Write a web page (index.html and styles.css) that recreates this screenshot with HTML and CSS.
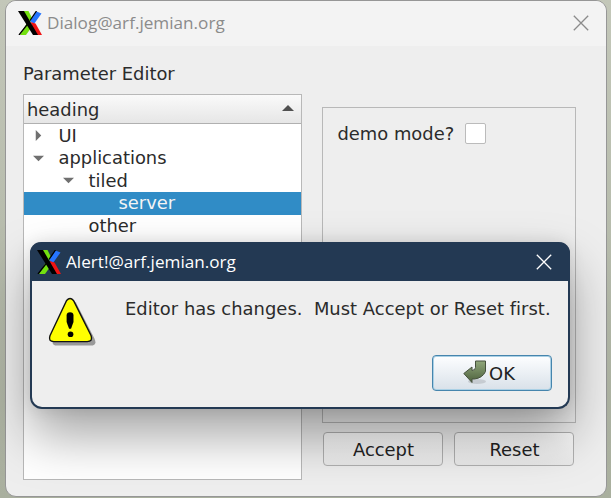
FILE: index.html
```html
<!DOCTYPE html>
<html lang="en">
<head>
<meta charset="utf-8">
<title>Parameter Editor</title>
<link rel="stylesheet" href="styles.css">
</head>
<body>
<svg width="0" height="0" class="defs">
  <symbol id="xlogo" viewBox="0 0 24 24">
    <path d="M5 0h5.500l4 8-3 4z" fill="#73e010"/>
    <path d="M9.500 11l3.500 6-5 7H2z" fill="#73e010"/>
    <path d="M18.500 .5l5 2L16 13l-4-3z" fill="#2675ff"/>
    <path d="M12.500 11l5 1.500 6.500 11.500h-6z" fill="#f01414"/>
    <path d="M0 0h6l14 24h-5z" fill="#000"/>
    <path d="M18.500 0L12 9.500M10 12.500L1 24" stroke="#000" stroke-width="1.3"/>
  </symbol>
  <symbol id="close" viewBox="0 0 16 16">
    <path d="M.8.8l14.400 14.400M15.200.8L.8 15.200" fill="none" stroke="currentColor" stroke-width="1.3"/>
  </symbol>
</svg>
<main class="window">
  <header class="titlebar">
    <svg class="logo"><use href="#xlogo"/></svg>
    <span class="title">Dialog@arf.jemian.org</span>
    <svg class="close"><use href="#close"/></svg>
  </header>
  <div class="content">
    <h1>Parameter Editor</h1>
    <div class="columns">
      <section class="tree">
        <div class="tree-head"><span>heading</span><svg width="12" height="6"><path d="M0 6L6 0l6 6z" fill="#505050"/></svg></div>
        <div class="row"><svg class="arrow" viewBox="0 0 12 12"><path d="M3 0l6 6-6 6z"/></svg><span>UI</span></div>
        <div class="row"><svg class="arrow" viewBox="0 0 12 12"><path d="M0 3h12L6 9z"/></svg><span>applications</span></div>
        <div class="row level1"><svg class="arrow" viewBox="0 0 12 12"><path d="M0 3h12L6 9z"/></svg><span>tiled</span></div>
        <div class="row level2 selected"><span>server</span></div>
        <div class="row level1"><span class="leaf">other</span></div>
      </section>
      <section class="side">
        <div class="panel"><span>demo mode?</span><span class="check"></span></div>
        <div class="buttons"><button>Accept</button><button>Reset</button></div>
      </section>
    </div>
  </div>
</main>
<div class="alert" role="alertdialog">
  <header class="alert-bar">
    <svg class="logo"><use href="#xlogo"/></svg>
    <span class="title">Alert!@arf.jemian.org</span>
    <svg class="close"><use href="#close"/></svg>
  </header>
  <div class="message">
    <svg class="warning" viewBox="0 0 50 50">
      <path d="M20 3q3-3 6 0l19 37q3 7-4 7H7q-7 0-4-7z" fill="#999" transform="translate(2.500 2)"/>
      <path d="M19 3q3.500-4 7 0l18 36q2 6-4 6H6q-6 0-4-6z" fill="#ff0" stroke="#111" stroke-width="1.4"/>
      <path d="M19 18q0-3 3.500-3t3.500 3v7l-2.500 7h-2L19 25z"/>
      <circle cx="23" cy="37.500" r="2.900"/>
    </svg>
    <span class="text">Editor has changes.&nbsp; Must Accept or Reset first.</span>
  </div>
  <button class="ok">
    <svg width="26" height="26" viewBox="0 0 26 26">
      <defs><linearGradient id="green" x2="0" y2="1"><stop stop-color="#90a77b"/><stop offset="1" stop-color="#4d613d"/></linearGradient></defs>
      <ellipse cx="14" cy="21.500" rx="9" ry="2.500" fill="#000" opacity=".12"/>
      <path d="M12.500 1h10v10.500q-3 6.500-11 7.500H9v3.500L.8 13.500 9 7v3.500q3.500-.5 3.500-3z" fill="url(#green)" stroke="#46513e"/>
    </svg><span>OK</span>
  </button>
</div>
</body>
</html>
```
FILE: styles.css
```css
* { box-sizing: border-box; }
body {
  margin: 0;
  width: 611px;
  height: 498px;
  padding: 0 4px 1px 5px;
  overflow: hidden;
  background: linear-gradient(#c3c7b9, #a9af9e);
  font: 17.9px "DejaVu Sans", sans-serif;
  color: #2b2b2b;
}
.defs { position: absolute; }
.window {
  height: 497px;
  width: 602px;
  border: 1px solid #969696;
  border-radius: 11px;
  background: #eee;
  overflow: hidden;
}
.titlebar, .alert-bar {
  display: flex;
  align-items: center;
  font-family: "Open Sans", sans-serif;
}
.titlebar {
  height: 45px;
  padding: 0 17px 2px 12px;
  background: #f3f3f3;
  color: #8b8b8b;
}
.logo { width: 24px; height: 24px; flex: none; }
.title { margin-left: 5px; font-size: 17.15px; white-space: nowrap; }
.close { width: 16px; height: 16px; margin-left: auto; }
.content { padding: 16px 30px 0 17px; }
h1 { margin: 0; font: inherit; line-height: 23px; }
.columns { display: flex; margin-top: 9px; }
.tree {
  width: 280px;
  height: 386px;
  border: 1px solid #b8b8b8;
  background: #fff;
  line-height: 22.500px;
}
.tree-head {
  display: flex;
  justify-content: space-between;
  height: 29px;
  padding: 4px 7px 0 3px;
  border-bottom: 1px solid #b0b0b0;
  background: linear-gradient(#fafafa, #e6e6e6);
}
.tree-head svg { margin-top: 6px; }
.row { display: flex; align-items: center; height: 22.500px; padding-left: 9px; }
.tree-head + .row { margin-top: .5px; }
.arrow { width: 11px; height: 11px; margin-right: 14.500px; fill: #707070; }
.level1 { padding-left: 39px; }
.level2 { padding-left: 94.500px; }
.leaf { margin-left: 25.500px; }
.selected { background: #308cc6; color: #f4f4f4; }
.side { margin: 13px 0 0 20px; width: 254px; }
.panel {
  display: flex;
  align-items: flex-start;
  height: 316px;
  padding: 14px;
  border: 1px solid #b8b8b8;
  line-height: 23px;
}
.check {
  width: 21px;
  height: 21px;
  margin: 1px 0 0 11px;
  border: 1px solid #bbb;
  border-radius: 2px;
  background: #fff;
}
.buttons { display: flex; gap: 11px; margin: 9px 0 0 1px; }
button {
  width: 120px;
  height: 34px;
  padding: 0;
  border: 1px solid #b0b0b0;
  border-radius: 4px;
  background: linear-gradient(#fcfcfc, #e9e9e9);
  color: #222;
  font: inherit;
}
.alert {
  position: absolute;
  left: 30px;
  top: 242px;
  width: 540px;
  height: 167px;
  border: 2px solid #233953;
  border-top: 0;
  border-radius: 12px;
  background: #eee;
  box-shadow: 0 26px 52px rgba(0,0,0,.36), 0 0 16px rgba(0,0,0,.1);
}
.alert-bar {
  height: 39px;
  margin: 0 -2px;
  padding: 0 18px 0 7px;
  border-radius: 11px 11px 0 0;
  background: #233953;
  color: #fff;
}
.message { display: flex; height: 74px; padding: 16px 0 0 16px; }
.warning { width: 49px; height: 50px; flex: none; }
.text { margin-left: 28px; line-height: 23px; white-space: nowrap; letter-spacing: .035px; }
.ok {
  display: flex;
  align-items: center;
  justify-content: center;
  height: 36px;
  margin-left: 400px;
  padding-right: 6px;
  border-color: #4685ad;
  box-shadow: inset 0 0 0 1px #aad0e5;
  background: linear-gradient(#fdfeff, #d9e1e9);
}
```
